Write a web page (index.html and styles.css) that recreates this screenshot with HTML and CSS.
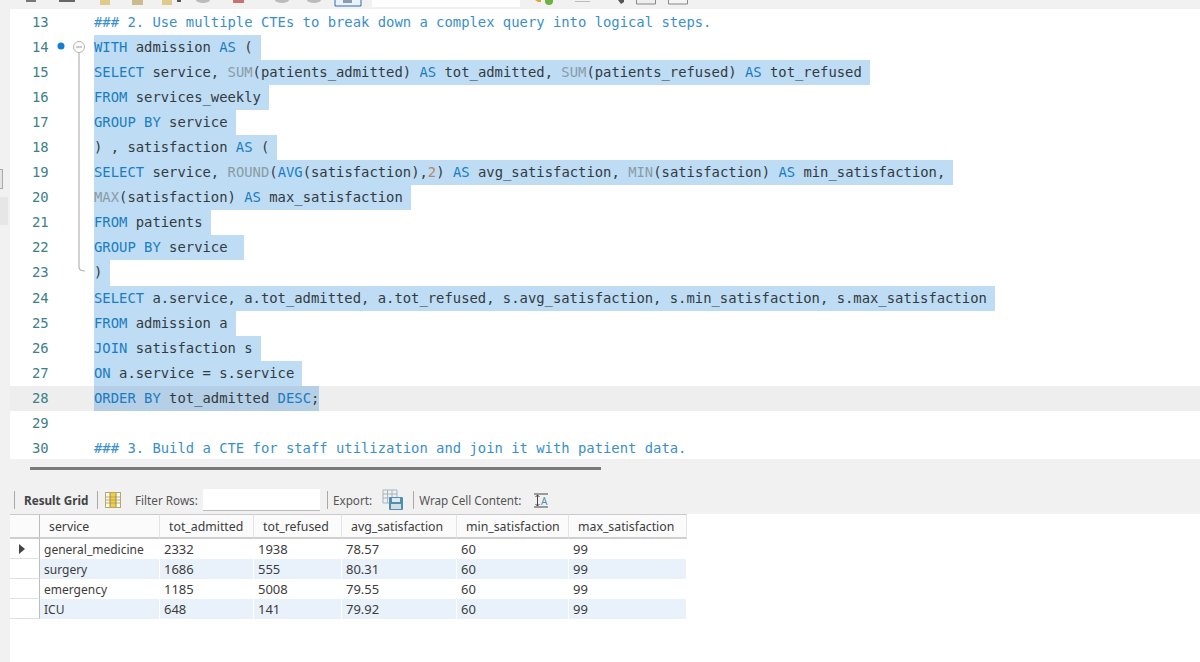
FILE: index.html
```html
<!DOCTYPE html>
<html>
<head>
  <link rel="stylesheet" href="styles.css">
</head>
<body>
  <div class="toolbar">
    <svg width="1200" height="9" viewBox="0 0 1200 9">
      <rect x="26" y="0" width="10" height="2" fill="#777"/>
      <rect x="59" y="0" width="16" height="2" fill="#666"/>
      <rect x="100" y="0" width="10" height="5" fill="#e0c98a"/>
      <rect x="132" y="0" width="11" height="5" fill="#cdbb8c"/>
      <rect x="162" y="0" width="10" height="5" fill="#e0c98a"/>
      <rect x="177" y="0" width="4" height="2" fill="#555"/>
      <ellipse cx="203" cy="0" rx="7" ry="3" fill="#bbb"/>
      <rect x="233" y="0" width="11" height="3" fill="#c9736f"/>
      <ellipse cx="282" cy="0" rx="7" ry="3" fill="#bbb"/>
      <ellipse cx="314" cy="0" rx="7" ry="3" fill="#bbb"/>
      <path d="M335 0V6H361V0" fill="#eaf2fa" stroke="#2a6fb5"/>
      <rect x="343" y="0" width="9" height="3" fill="#8d9bb0"/>
      <rect x="372" y="0" width="148" height="7" fill="#fff"/>
      <path d="M535 0l3 2h3V0z" fill="#d8a93a"/>
      <circle cx="549" cy="1" r="4" fill="#6db33f"/>
      <rect x="575" y="1" width="15" height="1" fill="#bbb"/>
      <path d="M618 0h6v2l-3 2z" fill="#555"/>
      <path d="M636.500 0V4H655.500V0" fill="#eee" stroke="#888"/>
      <path d="M668.500 0V4H687.500V0" fill="#f4f4f4" stroke="#888"/>
    </svg>
  </div>

  <div class="splitter"></div>
  <div class="side-shade"></div>

  <div class="editor">
    <div class="line"><span class="num">13</span><span class="code"><span class="cm">### 2. Use multiple CTEs to break down a complex query into logical steps.</span></span></div>
    <div class="line"><span class="num">14</span><span class="code sel"><span class="kw">WITH</span> admission <span class="kw">AS</span> (</span></div>
    <div class="line"><span class="num">15</span><span class="code sel"><span class="kw">SELECT</span> service, <span class="fn">SUM</span>(patients_admitted) <span class="kw">AS</span> tot_admitted, <span class="fn">SUM</span>(patients_refused) <span class="kw">AS</span> tot_refused</span></div>
    <div class="line"><span class="num">16</span><span class="code sel"><span class="kw">FROM</span> services_weekly</span></div>
    <div class="line"><span class="num">17</span><span class="code sel"><span class="kw">GROUP BY</span> service</span></div>
    <div class="line"><span class="num">18</span><span class="code sel">) , satisfaction <span class="kw">AS</span> (</span></div>
    <div class="line"><span class="num">19</span><span class="code sel"><span class="kw">SELECT</span> service, <span class="fn">ROUND</span>(<span class="kw">AVG</span>(satisfaction),<span class="nb">2</span>) <span class="kw">AS</span> avg_satisfaction, <span class="fn">MIN</span>(satisfaction) <span class="kw">AS</span> min_satisfaction,</span></div>
    <div class="line"><span class="num">20</span><span class="code sel"><span class="fn">MAX</span>(satisfaction) <span class="kw">AS</span> max_satisfaction</span></div>
    <div class="line"><span class="num">21</span><span class="code sel"><span class="kw">FROM</span> patients</span></div>
    <div class="line"><span class="num">22</span><span class="code sel"><span class="kw">GROUP BY</span> service </span></div>
    <div class="line"><span class="num">23</span><span class="code sel">)</span></div>
    <div class="line"><span class="num">24</span><span class="code sel"><span class="kw">SELECT</span> a.service, a.tot_admitted, a.tot_refused, s.avg_satisfaction, s.min_satisfaction, s.max_satisfaction</span></div>
    <div class="line"><span class="num">25</span><span class="code sel"><span class="kw">FROM</span> admission a</span></div>
    <div class="line"><span class="num">26</span><span class="code sel"><span class="kw">JOIN</span> satisfaction s</span></div>
    <div class="line"><span class="num">27</span><span class="code sel"><span class="kw">ON</span> a.service = s.service</span></div>
    <div class="line current"><span class="num">28</span><span class="code sel last"><span class="kw">ORDER BY</span> tot_admitted <span class="kw">DESC</span>;</span></div>
    <div class="line"><span class="num">29</span><span class="code"></span></div>
    <div class="line"><span class="num">30</span><span class="code"><span class="cm">### 3. Build a CTE for staff utilization and join it with patient data.</span></span></div>

    <svg class="fold" width="30" height="250" viewBox="0 0 30 250">
      <circle cx="9" cy="5" r="3.500" fill="#0f7fd6"/>
      <circle cx="27" cy="6" r="5.500" fill="#fff" stroke="#b5b5ad"/>
      <path d="M24 6H30" stroke="#9a9a92"/>
      <path d="M27 12V226Q27 230 33 230" fill="none" stroke="#b5b5ad" stroke-width="1.200"/>
    </svg>
  </div>

  <div class="hscroll"><div class="thumb"></div></div>

  <div class="result-bar">
    <span class="sep first"></span>
    <span class="bar-title">Result Grid</span>
    <span class="sep"></span>
    <svg class="ico-grid" width="16" height="16" viewBox="0 0 16 16">
      <rect x="0.500" y="0.500" width="15" height="15" fill="#fff" stroke="#b9a76a"/>
      <rect x="5" y="1" width="6" height="14" fill="#f3cf3c"/>
      <path d="M1 5H15M1 8H15M1 11H15" stroke="#b9a76a"/>
      <path d="M5 1V15M11 1V15" stroke="#a58a3a"/>
    </svg>
    <span class="bar-label filter">Filter Rows:</span>
    <span class="filter-input"></span>
    <span class="sep wide"></span>
    <span class="bar-label">Export:</span>
    <svg class="ico-export" width="22" height="22" viewBox="0 0 22 22">
      <path d="M1 1H15V14H1zM1 5H15M1 9H15M5.500 1V14M10 1V14" fill="#eef1f4" stroke="#a9b3bb"/>
      <rect x="7" y="8" width="14" height="13" rx="1" fill="#4f8fb0"/>
      <rect x="10" y="9" width="8" height="4" fill="#dfeaf0"/>
      <rect x="9" y="15" width="10" height="5" fill="#d5dde2"/>
    </svg>
    <span class="sep wide"></span>
    <span class="bar-label">Wrap Cell Content:</span>
    <svg class="ico-wrap" width="14" height="15" viewBox="0 0 14 15">
      <path d="M0 1H14M0 14H14" stroke="#444"/>
      <path d="M3.500 2V13M1.500 4L3.500 2L5.500 4M1.500 11L3.500 13L5.500 11" fill="none" stroke="#444"/>
      <text x="7" y="12" class="wrap-a">A</text>
    </svg>
  </div>

  <div class="grid-wrap">
    <table class="grid">
      <thead>
        <tr><th class="mark"></th><th class="c1">service</th><th class="c2">tot_admitted</th><th class="c3">tot_refused</th><th class="c4">avg_satisfaction</th><th class="c5">min_satisfaction</th><th class="c6">max_satisfaction</th></tr>
      </thead>
      <tbody>
        <tr><td class="mark"><span class="arrow"></span></td><td>general_medicine</td><td>2332</td><td>1938</td><td>78.57</td><td>60</td><td>99</td></tr>
        <tr class="alt"><td class="mark"></td><td>surgery</td><td>1686</td><td>555</td><td>80.31</td><td>60</td><td>99</td></tr>
        <tr><td class="mark"></td><td>emergency</td><td>1185</td><td>5008</td><td>79.55</td><td>60</td><td>99</td></tr>
        <tr class="alt"><td class="mark"></td><td>ICU</td><td>648</td><td>141</td><td>79.92</td><td>60</td><td>99</td></tr>
      </tbody>
    </table>
  </div>
</body>
</html>
```

FILE: styles.css
```css
html, body {
  margin: 0;
  height: 100%;
}

body {
  background-color: #f1f1f1;
  position: relative;
  overflow: hidden;
  display: flex;
  flex-direction: column;
  font-family: "Noto Sans", sans-serif;
}

.toolbar {
  height: 9px;
  flex: none;
}

.toolbar svg {
  display: block;
}

/* bits of the window splitter on the far left */
.splitter {
  position: absolute;
  left: 0;
  top: 169px;
  width: 2px;
  height: 18px;
  background-color: #e4e4e4;
  border: 1px solid #aaa;
  border-left: none;
}

.side-shade {
  position: absolute;
  left: 0;
  top: 197px;
  width: 8px;
  height: 28px;
  background-color: #e6e6e6;
}

.editor {
  position: relative;
  flex: none;
  height: 450px;
  margin-left: 10px;
  padding-top: 1px;
  box-sizing: border-box;
  background-color: #fff;
  overflow: hidden;
  font-family: "DejaVu Sans Mono", monospace;
  font-size: 13.87px;
  color: #333b40;
}

.line {
  display: flex;
  height: 25.06px;
  line-height: 25.06px;
  white-space: pre;
}

.line.current {
  background-color: #eeeeee;
}

.num {
  width: 84px;
  padding-left: 22px;
  box-sizing: border-box;
  flex: none;
  color: #3d8088;
}

.sel {
  background-color: #bedcf4;
  padding-right: 8px;
}

.sel.last {
  background-color: #b4cfe6;
  padding-right: 0;
}

.kw {
  color: #1a7cc2;
}

.cm {
  color: #3a8fca;
}

.fn {
  color: #8b9ba6;
}

.nb {
  color: #b58a63;
}

.fold {
  position: absolute;
  left: 42px;
  top: 32px;
  overflow: visible;
}

.hscroll {
  height: 27px;
  flex: none;
  padding-top: 8px;
  box-sizing: border-box;
}

.thumb {
  width: 571px;
  height: 3px;
  margin-left: 30px;
  background-color: #7a7a7a;
}

.result-bar {
  height: 28px;
  flex: none;
  display: flex;
  align-items: center;
  font-size: 11.700px;
  color: #555;
}

.sep {
  width: 1px;
  height: 18px;
  margin: 0 7px;
  background-color: #a9a9a9;
}

.sep.first {
  margin-left: 14px;
  margin-right: 9px;
}

.sep.wide {
  margin: 0 5px;
}

.bar-title {
  width: 66px;
  font-weight: 700;
  color: #444;
  white-space: nowrap;
}

.ico-grid {
  margin-right: 14px;
}

.bar-label {
  white-space: nowrap;
}

.bar-label.filter {
  width: 68px;
}

.filter-input {
  width: 117px;
  height: 22px;
  margin-right: 2px;
  background-color: #fff;
  border-bottom: 1px solid #bbb;
  box-sizing: border-box;
}

.ico-export {
  margin-left: 10px;
  margin-right: 4px;
}

.ico-wrap {
  margin-left: 13px;
}

.wrap-a {
  font-family: "Noto Sans", sans-serif;
  font-size: 10px;
  fill: #4f8fb0;
}

.grid-wrap {
  flex: 1;
  margin-left: 10px;
  background-color: #fff;
}

.grid {
  border-collapse: separate;
  border-spacing: 0;
  table-layout: fixed;
  width: 677px;
  font-size: 12px;
  color: #3c3c3c;
}

.grid th {
  height: 25px;
  padding: 0 0 0 9px;
  box-sizing: border-box;
  font-size: 12.300px;
  font-weight: 400;
  text-align: left;
  background-color: #fbfbfb;
  border-top: 1px solid #c9c9c9;
  border-bottom: 2px solid #cfcfcf;
  border-right: 1px solid #e4e4e4;
}

.grid td {
  height: 20px;
  padding: 0 0 0 4px;
  box-sizing: border-box;
  border-right: 1px solid #fff;
  white-space: nowrap;
}

/* the number columns */
.grid td + td + td {
  font-size: 13px;
}

.grid th.mark {
  width: 30px;
  border-right: 1px solid #bdbdbd;
}

.grid td.mark {
  background-color: #fff;
  border-right: 1px solid #bdbdbd;
  border-bottom: 1px solid #e0e0e0;
}

.c1 { width: 120px; }
.c2 { width: 94px; }
.c3 { width: 88px; }
.c4 { width: 115px; }
.c5 { width: 112px; }
.c6 { width: 118px; }

.grid tr.alt td {
  background-color: #e9f1fa;
}

.grid tr.alt td.mark {
  background-color: #fff;
}

.arrow {
  display: block;
  width: 0;
  height: 0;
  margin-left: 5px;
  border-left: 6px solid #444;
  border-top: 5px solid transparent;
  border-bottom: 5px solid transparent;
}
```
